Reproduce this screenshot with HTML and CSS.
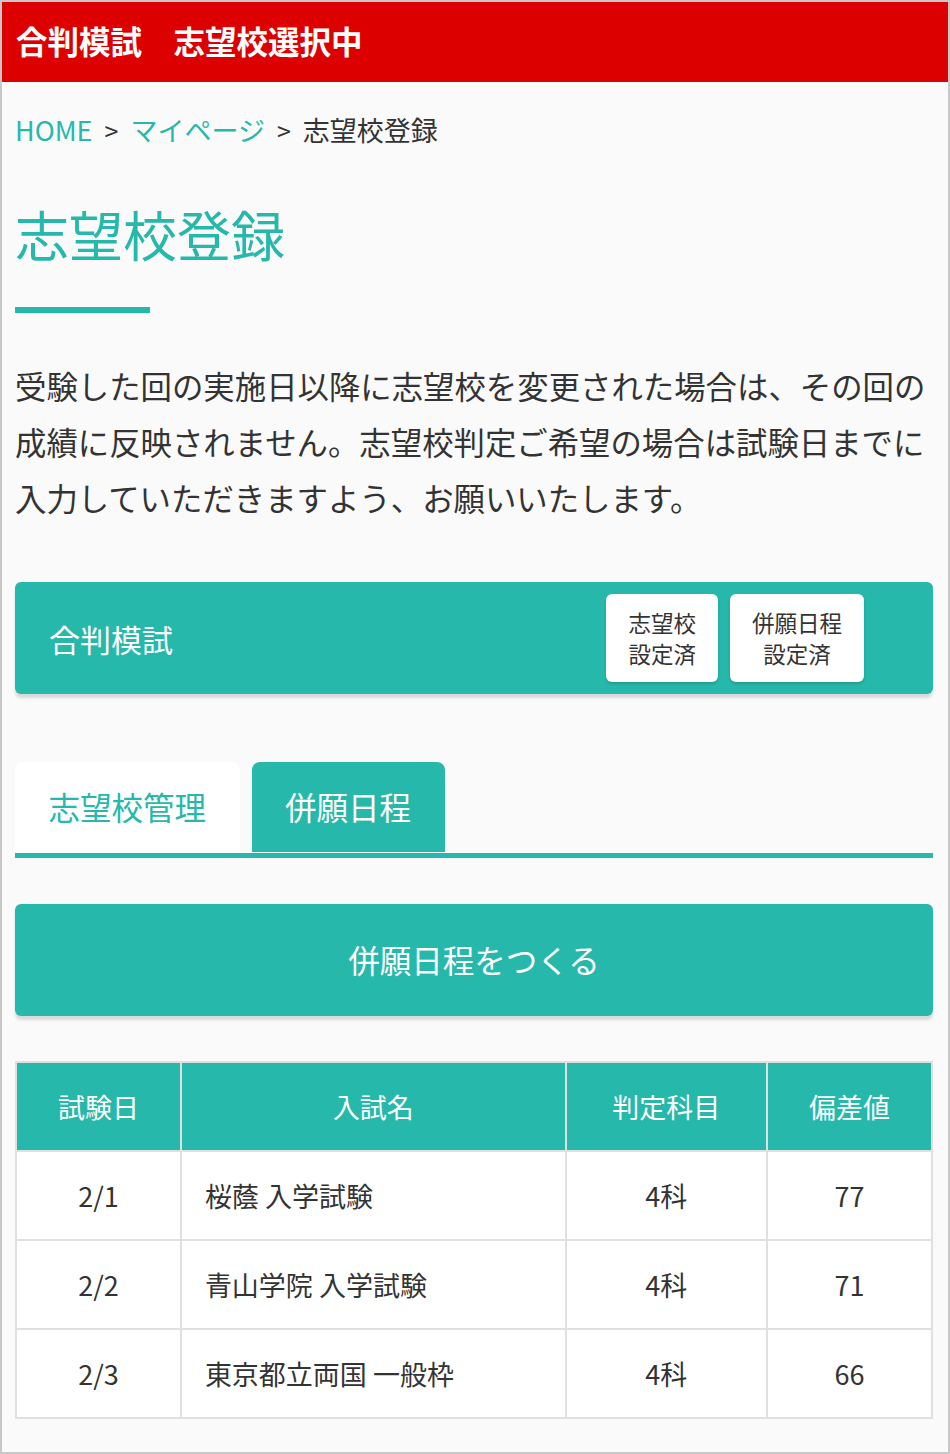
FILE: index.html
```html
<!DOCTYPE html>
<html lang="ja">
<head>
    <meta charset="utf-8">
    <title>志望校登録</title>
    <link rel="stylesheet" href="styles.css">
</head>
<body>
    <div class="frame">
        <div class="top-bar">合判模試　志望校選択中</div>

        <div class="main-content">
            <div class="breadcrumb">
                <a href="/" class="crumb-link">HOME</a>
                <span class="crumb-sep">&gt;</span>
                <a href="/mypage" class="crumb-link">マイページ</a>
                <span class="crumb-sep">&gt;</span>
                <span class="crumb-current">志望校登録</span>
            </div>

            <h1 class="page-title">志望校登録</h1>
            <div class="title-bar"></div>

            <p class="notice">受験した回の実施日以降に志望校を変更された場合は、その回の成績に反映されません。志望校判定ご希望の場合は試験日までに入力していただきますよう、お願いいたします。</p>

            <div class="exam-card">
                <div class="exam-name">合判模試</div>
                <div class="badges">
                    <div class="badge">志望校<br>設定済</div>
                    <div class="badge">併願日程<br>設定済</div>
                </div>
            </div>

            <div class="tabs">
                <a href="/schools" class="tab">志望校管理</a>
                <a href="/schedule" class="tab active">併願日程</a>
            </div>

            <a href="/schedule/new" class="big-button">併願日程をつくる</a>

            <table class="schedule-table">
                <colgroup>
                    <col class="col-date">
                    <col class="col-name">
                    <col class="col-subject">
                    <col class="col-score">
                </colgroup>
                <thead>
                    <tr>
                        <th>試験日</th>
                        <th>入試名</th>
                        <th>判定科目</th>
                        <th>偏差値</th>
                    </tr>
                </thead>
                <tbody>
                    <tr>
                        <td>2/1</td>
                        <td class="name">桜蔭 入学試験</td>
                        <td>4科</td>
                        <td>77</td>
                    </tr>
                    <tr>
                        <td>2/2</td>
                        <td class="name">青山学院 入学試験</td>
                        <td>4科</td>
                        <td>71</td>
                    </tr>
                    <tr>
                        <td>2/3</td>
                        <td class="name">東京都立両国 一般枠</td>
                        <td>4科</td>
                        <td>66</td>
                    </tr>
                </tbody>
            </table>
        </div>
    </div>
</body>
</html>
```

FILE: styles.css
```css
html, body {
    margin: 0;
    padding: 0;
}
body {
    font-family: "Noto Sans CJK JP", "Noto Sans", sans-serif;
    background-color: #fafafa;
    color: #333;
}
.frame {
    box-sizing: border-box;
    width: 950px;
    height: 1454px;
    border: 2px solid #c8c8c8;
    overflow: hidden;
}
.top-bar {
    height: 80px;
    line-height: 76px;
    padding: 0 14px;
    background-color: #dd0000;
    color: white;
    font-size: 31.5px;
    font-weight: bold;
}
.main-content {
    padding: 28px 15px 0 13px;
}
.breadcrumb {
    display: flex;
    align-items: center;
    height: 40px;
    font-size: 27px;
    line-height: 40px;
}
.crumb-link {
    color: #26b8aa;
    text-decoration: none;
}
.crumb-sep {
    margin: 0 12px;
    font-size: 25px;
}
.page-title {
    margin: 49px 0 0;
    font-size: 54px;
    font-weight: normal;
    line-height: 70px;
    color: #26b8aa;
}
.title-bar {
    width: 135px;
    height: 6px;
    margin-top: 38px;
    background-color: #26b8aa;
}
.notice {
    margin: 45px 0 0;
    font-size: 31.4px;
    line-height: 56px;
}
.exam-card {
    display: flex;
    align-items: center;
    justify-content: space-between;
    height: 112px;
    margin-top: 56px;
    padding: 0 69px 0 34px;
    background-color: #26b8aa;
    border-radius: 6px;
    box-shadow: 0 4px 3px rgba(0, 0, 0, 0.13);
}
.exam-name {
    color: white;
    font-size: 31px;
}
.badges {
    display: flex;
    gap: 12px;
}
.badge {
    padding: 13px 22px;
    background-color: white;
    border-radius: 6px;
    font-size: 22.5px;
    line-height: 31px;
    text-align: center;
    box-shadow: 0 2px 3px rgba(0, 0, 0, 0.15);
}
.tabs {
    display: flex;
    gap: 12px;
    margin-top: 68px;
    padding-bottom: 1px;
    border-bottom: 5px solid #26b8aa;
}
.tab {
    height: 90px;
    line-height: 88px;
    padding: 0 33.5px;
    background-color: white;
    color: #26b8aa;
    font-size: 31.5px;
    text-decoration: none;
    border-radius: 8px 8px 0 0;
}
.tab.active {
    background-color: #26b8aa;
    color: white;
}
.big-button {
    display: block;
    height: 112px;
    line-height: 110px;
    margin-top: 46px;
    background-color: #26b8aa;
    color: white;
    font-size: 31.5px;
    text-align: center;
    text-decoration: none;
    border-radius: 6px;
    box-shadow: 0 4px 3px rgba(0, 0, 0, 0.13);
}
.schedule-table {
    width: 100%;
    margin-top: 45px;
    border-collapse: collapse;
    table-layout: fixed;
    font-size: 27px;
}
.col-date { width: 18%; }
.col-name { width: 42%; }
.col-subject { width: 22%; }
.col-score { width: 18%; }
.schedule-table th,
.schedule-table td {
    height: 87px;
    padding: 0;
    border: 2px solid #e0e0e0;
    text-align: center;
}
.schedule-table th {
    background-color: #26b8aa;
    color: white;
    font-weight: normal;
}
.schedule-table td {
    background-color: white;
}
.schedule-table td.name {
    text-align: left;
    padding-left: 23px;
}
```
